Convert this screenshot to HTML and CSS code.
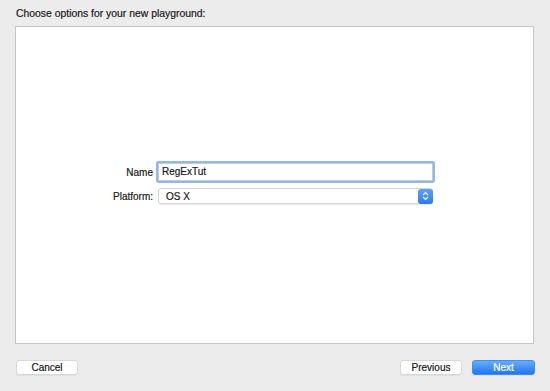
FILE: index.html
```html
<!DOCTYPE html>
<html>
<head>
<meta charset="utf-8">
<link rel="stylesheet" href="styles.css">
</head>
<body>
<div class="window">
  <div class="title">Choose options for your new playground:</div>
  <div class="panel">
    <div class="form">
      <div class="row">
        <label class="label">Name</label>
        <div class="field">RegExTut</div>
      </div>
      <div class="row">
        <label class="label">Platform:</label>
        <div class="select">
          <span>OS X</span>
          <span class="arrows">
            <svg width="7" height="10" viewBox="0 0 7 10"><path d="M1 4 L3.5 1.5 L6 4" fill="none" stroke="#fff" stroke-width="1.2"/><path d="M1 6 L3.5 8.5 L6 6" fill="none" stroke="#fff" stroke-width="1.2"/></svg>
          </span>
        </div>
      </div>
    </div>
  </div>
  <div class="buttons">
    <button class="btn">Cancel</button>
    <div class="right">
      <button class="btn">Previous</button>
      <button class="btn primary">Next</button>
    </div>
  </div>
</div>
</body>
</html>
```

FILE: styles.css
```css
html, body {
  margin: 0;
  padding: 0;
  background: #ececec;
  font-family: "Liberation Sans", Arial, sans-serif;
  font-size: 10px;
  color: #1a1a1a;
  -webkit-text-stroke: 0.2px currentColor;
}
.window {
  width: 550px;
  height: 391px;
  box-sizing: border-box;
  padding: 8px 16px 0 15px;
}
.title {
  height: 18px;
  line-height: 12px;
  padding-left: 1px;
  font-size: 10.4px;
}
.panel {
  width: 519px;
  height: 318px;
  box-sizing: border-box;
  background: #fff;
  border: 1px solid #c6c6c6;
  display: flex;
  align-items: flex-start;
  justify-content: flex-start;
  padding-top: 136px;
}
.form {
  display: flex;
  flex-direction: column;
  gap: 7px;
}
.row {
  display: flex;
  align-items: center;
}
.label {
  width: 141px;
  text-align: right;
  padding-right: 4px;
  box-sizing: border-box;
}
.field {
  width: 275px;
  height: 18px;
  box-sizing: border-box;
  border: 1px solid #c9c9c9;
  box-shadow: 0 0 0 2px #8fb8ee;
  padding: 0 3px;
  margin-left: 1px;
  line-height: 16px;
  border-radius: 1px;
  background: #fff;
}
.select {
  width: 275px;
  height: 16px;
  box-sizing: border-box;
  margin-left: 1px;
  border: 1px solid #d6d6d6;
  border-radius: 3px;
  display: flex;
  align-items: center;
  justify-content: space-between;
  padding-left: 7px;
  box-shadow: 0 1px 1px rgba(0,0,0,0.08);
}
.arrows {
  width: 15px;
  height: 15px;
  margin-right: -1px;
  background: linear-gradient(#5aa2f7, #2b7cf0);
  border-radius: 3px;
  display: flex;
  align-items: center;
  justify-content: center;
}
.buttons {
  display: flex;
  justify-content: space-between;
  margin-top: 16px;
  padding-left: 1px;
  width: 519px;
}
.right {
  display: flex;
  gap: 10px;
}
.btn {
  font-family: "Liberation Sans", Arial, sans-serif;
  font-size: 10px;
  -webkit-text-stroke: 0.2px currentColor;
  height: 15px;
  width: 62px;
  padding: 0;
  border: 1px solid #d8d8d8;
  border-radius: 3px;
  background: #fff;
  color: #1a1a1a;
  line-height: 13px;
  box-shadow: 0 1px 1px rgba(0,0,0,0.06);
}
.primary {
  width: 63px;
  border-color: #3f8ef3;
  background: linear-gradient(#6aacf9, #1f76ef);
  color: #fff;
}
```
